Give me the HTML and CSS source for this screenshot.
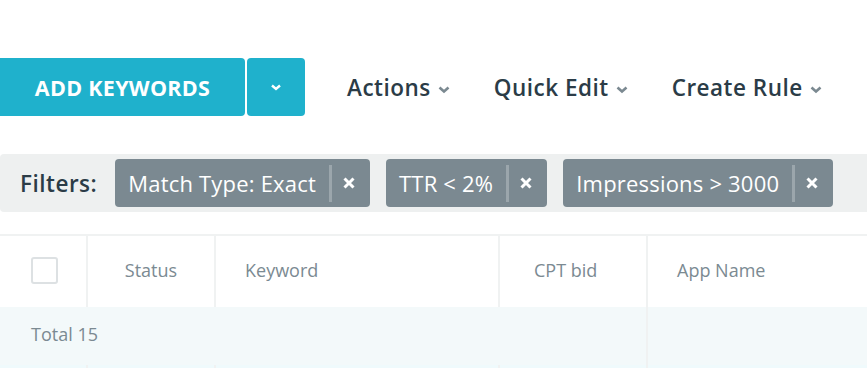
FILE: index.html
```html
<!DOCTYPE html>
<html lang="en">
<head>
  <meta charset="UTF-8" />
  <title>Keywords</title>
  <link rel="stylesheet" href="styles.css">
</head>
<body>
  <div class="toolbar">
    <button class="btn-add">ADD KEYWORDS</button>
    <button class="btn-caret">
      <svg width="10" height="7" viewBox="0 0 10 7"><path d="M1 1.5 L5 5 L9 1.5" fill="none" stroke="#fff" stroke-width="2.4"/></svg>
    </button>
    <div class="menu">Actions<span class="chev"><svg width="12" height="8" viewBox="0 0 12 8"><path d="M1.5 1.5 L6 5.5 L10.5 1.5" fill="none" stroke="#7b8991" stroke-width="2.6"/></svg></span></div>
    <div class="menu">Quick Edit<span class="chev"><svg width="12" height="8" viewBox="0 0 12 8"><path d="M1.5 1.5 L6 5.5 L10.5 1.5" fill="none" stroke="#7b8991" stroke-width="2.6"/></svg></span></div>
    <div class="menu">Create Rule<span class="chev"><svg width="12" height="8" viewBox="0 0 12 8"><path d="M1.5 1.5 L6 5.5 L10.5 1.5" fill="none" stroke="#7b8991" stroke-width="2.6"/></svg></span></div>
  </div>

  <div class="filters">
    <span class="filters-label">Filters:</span>
    <div class="chip"><span class="chip-text">Match Type: Exact</span><span class="chip-sep"></span><svg class="chip-x" width="14" height="14" viewBox="0 0 14 14"><path d="M2.5 2.5 L11.5 11.5 M11.5 2.5 L2.5 11.5" stroke="#fff" stroke-width="3"/></svg></div>
    <div class="chip"><span class="chip-text">TTR &lt; 2%</span><span class="chip-sep"></span><svg class="chip-x" width="14" height="14" viewBox="0 0 14 14"><path d="M2.5 2.5 L11.5 11.5 M11.5 2.5 L2.5 11.5" stroke="#fff" stroke-width="3"/></svg></div>
    <div class="chip"><span class="chip-text">Impressions &gt; 3000</span><span class="chip-sep"></span><svg class="chip-x" width="14" height="14" viewBox="0 0 14 14"><path d="M2.5 2.5 L11.5 11.5 M11.5 2.5 L2.5 11.5" stroke="#fff" stroke-width="3"/></svg></div>
  </div>

  <div class="grid">
    <div class="cell head first"><span class="checkbox"></span></div>
    <div class="cell head center">Status</div>
    <div class="cell head">Keyword</div>
    <div class="cell head bid">CPT bid</div>
    <div class="cell head">App Name</div>

    <div class="cell total span4">Total 15</div>
    <div class="cell total"></div>

    <div class="cell row first"></div>
    <div class="cell row"></div>
    <div class="cell row"></div>
    <div class="cell row"></div>
    <div class="cell row"></div>
  </div>
</body>
</html>
```

FILE: styles.css
```css
body {
  margin: 0;
  font-family: "Open Sans", "DejaVu Sans", sans-serif;
  background: white;
  overflow: hidden;
}
.toolbar {
  display: flex;
  align-items: center;
  padding-top: 58px;
  height: 58px;
}
.btn-add {
  width: 245px;
  height: 58px;
  background-color: #1fb1cc;
  color: white;
  border: none;
  border-radius: 0 4px 4px 0;
  font-family: inherit;
  font-weight: 700;
  font-size: 21.5px;
  letter-spacing: 0.3px;
  padding: 0;
}
.btn-caret {
  width: 58px;
  height: 58px;
  margin-left: 2px;
  background-color: #1fb1cc;
  border: none;
  border-radius: 4px;
  display: flex;
  align-items: center;
  justify-content: center;
  padding: 0;
}
.menu {
  margin-left: 42px;
  font-size: 22.5px;
  font-weight: 600;
  letter-spacing: 0.5px;
  color: #2b3c47;
  display: flex;
  align-items: center;
  gap: 7px;
  white-space: pre;
}
.menu + .menu {
  margin-left: 44px;
}
.chev {
  display: flex;
  padding-top: 5px;
}
.filters {
  margin-top: 38px;
  height: 58px;
  background-color: #eef0f0;
  border-radius: 4px 0 0 4px;
  display: flex;
  align-items: center;
  padding-left: 20px;
  gap: 16px;
}
.filters-label {
  font-size: 22.5px;
  font-weight: 600;
  letter-spacing: 0.5px;
  color: #2b3c47;
  margin-right: 2px;
}
.chip {
  height: 48px;
  background-color: #7b8991;
  border-radius: 4px;
  display: flex;
  align-items: center;
  padding: 0 14px 0 13px;
  color: white;
  font-size: 22px;
  letter-spacing: 0.2px;
}
.chip-sep {
  width: 3px;
  height: 37px;
  background-color: #9ba6ac;
  margin: 0 10px 0 13px;
}
.grid {
  margin-top: 22px;
  display: grid;
  grid-template-columns: 86px 128px 284px 148px 1fr;
  grid-template-rows: 71px 58px 40px;
  border-top: 2px solid #f0f2f2;
}
.cell {
  display: flex;
  align-items: center;
  border-left: 2px solid #f0f2f2;
  font-size: 18px;
  color: #7b8a92;
  padding-left: 29px;
}
.cell.head {
  padding-bottom: 3px;
}
.cell.first {
  border-left: none;
  padding-left: 31px;
}
.cell.center {
  justify-content: center;
  padding-left: 0;
}
.cell.bid {
  padding-left: 34px;
}
.checkbox {
  width: 23px;
  height: 23px;
  border: 2px solid #dde1e3;
  border-radius: 3px;
}
.total {
  background-color: #f3f9fa;
  padding-bottom: 5px;
}
.span4 {
  grid-column: span 4;
  border-left: none;
  padding-left: 31px;
}
.row {
  background-color: #effafc;
}
```
